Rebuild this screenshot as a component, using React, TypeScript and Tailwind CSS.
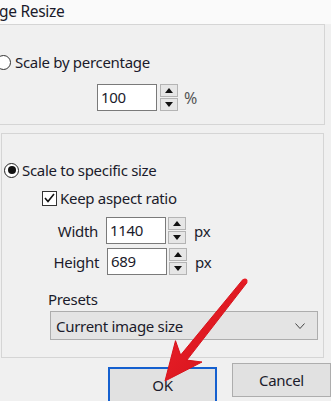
import React from "react";

function SpinButtons({ h = 27 }: { h?: number }) {
  const half = Math.floor(h / 2);
  return (
    <div className="flex flex-col w-[18px] gap-[1px]">
      <div
        className="flex items-center justify-center bg-[#e6e6e6] border border-[#b4b4b4]"
        style={{ height: half }}
      >
        <svg width="8" height="5" viewBox="0 0 8 5">
          <polygon points="0,5 8,5 4,0" fill="#111" />
        </svg>
      </div>
      <div
        className="flex items-center justify-center bg-[#e6e6e6] border border-[#b4b4b4]"
        style={{ height: h - half - 1 }}
      >
        <svg width="8" height="5" viewBox="0 0 8 5">
          <polygon points="0,0 8,0 4,5" fill="#111" />
        </svg>
      </div>
    </div>
  );
}

function NumInput({ value }: { value: string }) {
  return (
    <div className="w-[60px] h-[27px] bg-white border border-[#7a7a7a] flex items-center pl-[3px] text-[15px] leading-none">
      {value}
    </div>
  );
}

export default function App() {
  return (
    <div
      className="relative w-[331px] h-[401px] overflow-hidden bg-[#f0f0f0] text-[#1b1b2b] tracking-[-0.3px]"
      style={{ fontFamily: '"Noto Sans", "Open Sans", sans-serif' }}
    >
      {/* title */}
      <div className="h-[24px] bg-[#fafafa] text-[15.5px] leading-[20px] pt-[1px] -ml-[1px]">
        ge Resize
      </div>

      {/* group 1 */}
      <div className="-ml-[4px] w-[329px] h-[101px] border border-[#d5d5d5]">
        <div className="pt-[27px] flex items-center h-[47px]">
          <div className="-ml-[1px] w-[15px] h-[15px] rounded-full border border-[#333] bg-white" />
          <span className="ml-[4px] text-[15px] leading-[20px]">Scale by percentage</span>
        </div>
        <div className="mt-[12px] pl-[100px] flex items-center">
          <NumInput value="100" />
          <div className="ml-[3px]">
            <SpinButtons />
          </div>
          <span className="ml-[6px] text-[16px] text-[#555]">%</span>
        </div>
      </div>

      {/* group 2 */}
      <div className="mt-[8px] ml-[1px] w-[323px] h-[225px] border border-[#d5d5d5]">
        <div className="pt-[26px] flex items-center h-[46px]">
          <div className="ml-[2px] w-[15px] h-[15px] rounded-full border border-[#222] bg-white flex items-center justify-center">
            <div className="w-[8px] h-[8px] rounded-full bg-[#111]" />
          </div>
          <span className="ml-[3px] text-[15px] leading-[20px]">Scale to specific size</span>
        </div>
        <div className="mt-[8px] flex items-center h-[20px]">
          <div className="ml-[40px] w-[15px] h-[15px] border border-[#333] bg-white flex items-center justify-center">
            <svg width="11" height="10" viewBox="0 0 11 10">
              <polyline points="1,5 4,8.5 10,1" fill="none" stroke="#111" strokeWidth="1.6" />
            </svg>
          </div>
          <span className="ml-[3px] text-[15px] leading-[20px]">Keep aspect ratio</span>
        </div>
        <div className="mt-[9px] flex items-center">
          <span className="w-[96px] text-right text-[15px] leading-[20px]">Width</span>
          <div className="ml-[8px]">
            <NumInput value="1140" />
          </div>
          <div className="ml-[2px]">
            <SpinButtons />
          </div>
          <span className="ml-[8px] text-[15px] leading-[20px]">px</span>
        </div>
        <div className="mt-[4px] flex items-center">
          <span className="w-[97px] text-right text-[15px] leading-[20px]">Height</span>
          <div className="ml-[8px]">
            <NumInput value="689" />
          </div>
          <div className="ml-[2px]">
            <SpinButtons />
          </div>
          <span className="ml-[8px] text-[15px] leading-[20px]">px</span>
        </div>
        <div className="mt-[14px] ml-[46px] text-[15px] leading-[20px]">Presets</div>
        <div className="mt-[2px] ml-[48px] w-[268px] h-[29px] bg-[#e4e4e4] border border-[#adadad] flex items-center justify-between pl-[5px] pr-[12px]">
          <span className="text-[15px] leading-[20px]">Current image size</span>
          <svg width="10" height="6" viewBox="0 0 10 6">
            <polyline points="0.5,0.5 5,5.5 9.5,0.5" fill="none" stroke="#444" strokeWidth="1" />
          </svg>
        </div>
      </div>

      {/* buttons */}
      <div className="mt-[5px] flex items-start">
        <div className="ml-[108px] mt-[4px] w-[110px] h-[36px] bg-[#e1e1e1] border-2 border-[#1560cf] flex items-center justify-center text-[15px]">
          OK
        </div>
        <div className="ml-[15px] w-[100px] h-[34px] bg-[#e1e1e1] border border-[#adadad] flex items-center justify-center text-[15px]">
          Cancel
        </div>
      </div>

      {/* red arrow overlay */}
      <svg
        className="absolute left-0 top-0 pointer-events-none"
        width="331"
        height="401"
        viewBox="0 0 331 401"
      >
        <defs>
          <linearGradient id="ag" x1="0" y1="0" x2="1" y2="1">
            <stop offset="0" stopColor="#f0242b" />
            <stop offset="1" stopColor="#d0101a" />
          </linearGradient>
        </defs>
        <polygon
          points="243,279.4 180.6,355.1 175.5,340.7 165,381 202,362 186.9,360.1 247,282.6"
          fill="url(#ag)"
          stroke="#d8121b"
          strokeWidth="1"
          strokeLinejoin="round"
        />
        <circle cx="245" cy="281" r="2.5" fill="#e81d25" />
      </svg>
    </div>
  );
}
